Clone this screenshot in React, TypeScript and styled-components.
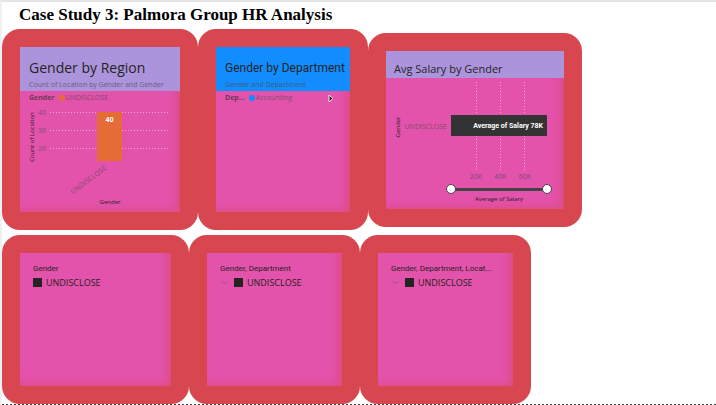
import React, { useState } from "react";
import styled, { createGlobalStyle } from "styled-components";

const GlobalStyle = createGlobalStyle`
  * { box-sizing: border-box; }
  body { margin: 0; background: #fff; font-family: "Open Sans", "Noto Sans", sans-serif; }
`;

const palette = {
  red: "#d84650",
  pink: "#e352ab",
  lilac: "#ac94dc",
  blue: "#118dff",
  orange: "#e66c37",
  ink: "#252423",
  muted: "#7d4f70",
};

const Page = styled.main`
  border-top: 2px solid #e4e4e4;
  border-left: 2px solid #f0f0f0;
`;

const PageTitle = styled.h1`
  margin: 0;
  padding: 2px 17px 3px;
  font: bold 17px/22px "Liberation Serif", serif;
  color: #000;
`;

const Row = styled.section<{ $columns: string }>`
  display: grid;
  grid-template-columns: ${(p) => p.$columns};
`;

const FilterRow = styled(Row)`
  margin-top: 5px;
`;

const PageBreak = styled.div`
  height: 1px;
  background: repeating-linear-gradient(90deg, #444 0 2px, #fff 2px 4px);
`;

const Card = styled.article<{ $lowered?: boolean }>`
  min-width: 0;
  display: flex;
  border: 18px solid ${palette.red};
  border-radius: 18px;
  align-self: ${(p) => (p.$lowered ? "start" : "stretch")};
  margin-top: ${(p) => (p.$lowered ? "4px" : "0")};
`;

const Panel = styled.div`
  flex: 1;
  min-width: 0;
  display: flex;
  flex-direction: column;
  background: ${palette.pink};
  box-shadow: inset -8px -6px 10px -6px rgba(216, 70, 80, 0.6);
`;

const Header = styled.header<{ $color: string; $compact?: boolean }>`
  padding: ${(p) => (p.$compact ? "10px 8px 1px" : "10px 0 0 9px")};
  background: ${(p) => p.$color};
  overflow: hidden;
  white-space: nowrap;
`;

const Heading = styled.h2<{ $size: number; $narrow?: boolean }>`
  margin: 0;
  font-family: ${(p) => (p.$narrow ? '"Roboto", sans-serif' : "inherit")};
  font-size: ${(p) => p.$size}px;
  line-height: ${(p) => (p.$size < 12 ? 16 : 22)}px;
  font-weight: 400;
  color: ${palette.ink};
`;

const Subtitle = styled.p<{ $dim?: boolean }>`
  margin: 0;
  font-family: "Noto Sans", sans-serif;
  font-size: 7px;
  line-height: 12px;
  color: ${(p) => (p.$dim ? "#3b6080" : "#6c6383")};
`;

const Legend = styled.div`
  display: flex;
  align-items: center;
  padding: 0 16px 2px 9px;
  height: 16px;
  font-size: 7px;
  line-height: 14px;
  color: ${palette.muted};
`;

const LegendTitle = styled.b`
  margin-right: 4px;
  font-weight: 700;
  color: #6e3b5c;
`;

const Dot = styled.span<{ $color: string }>`
  width: 6px;
  height: 6px;
  margin-right: 1px;
  border-radius: 50%;
  background: ${(p) => p.$color};
`;

const NextButton = styled.button`
  margin-left: auto;
  padding: 0;
  border: 0;
  background: none;
  display: flex;
`;

const Chart = styled.svg`
  display: block;
  width: 100%;
  height: auto;
  font-size: 7px;
  fill: ${palette.muted};
`;

const AxisTitle = styled.text`
  font-size: 6px;
  fill: ${palette.ink};
  text-anchor: middle;
`;

const BarLabel = styled.text`
  font-family: "Roboto", sans-serif;
  font-weight: 700;
  fill: #fff;
`;

const GridLine = styled.line`
  stroke: #eda6d0;
  stroke-width: 1;
  stroke-dasharray: 1 2;
`;

const RangeTrack = styled.div`
  display: grid;
  align-items: center;
  height: 10px;
  margin: 0 12px 0 60px;
  background: linear-gradient(#444, #444) center / calc(100% - 10px) 3px no-repeat;
`;

const Range = styled.input`
  grid-area: 1 / 1;
  appearance: none;
  width: 100%;
  height: 10px;
  margin: 0;
  background: none;
  pointer-events: none;
  &::-webkit-slider-thumb {
    appearance: none;
    box-sizing: border-box;
    width: 10px;
    height: 10px;
    border: 1px solid #444;
    border-radius: 50%;
    background: #fff;
    pointer-events: auto;
  }
`;

const RangeCaption = styled.div`
  margin: 0 12px 0 60px;
  padding-bottom: 5px;
  text-align: center;
  font-size: 6px;
  line-height: 10px;
  color: ${palette.ink};
`;

const FilterPanel = styled(Panel)`
  min-height: 133px;
  padding: 10px 13px;
`;

const FilterTitle = styled.h3`
  margin: 0;
  font: 400 8px/12px "Roboto", sans-serif;
  color: ${palette.ink};
  white-space: nowrap;
`;

const Option = styled.div`
  display: flex;
  align-items: center;
  height: 15px;
`;

const ExpandButton = styled.button`
  display: flex;
  width: 14px;
  padding: 0 0 0 1px;
  border: 0;
  background: none;
`;

const OptionLabel = styled.label`
  display: flex;
  align-items: center;
  gap: 4px;
  font-size: 9px;
  line-height: 15px;
  color: ${palette.ink};
`;

const Checkbox = styled.input`
  appearance: none;
  width: 9px;
  height: 9px;
  margin: 0;
  border: 1px solid ${palette.ink};
  &:checked { background: ${palette.ink}; }
`;

function RegionChart() {
  return (
    <Chart viewBox="0 0 160 105" role="img" aria-label="Count of Location by Gender">
      {[40, 30, 20].map((value, i) => (
        <g key={value}>
          <GridLine x1="30" x2="149" y1={5.5 + i * 18} y2={5.5 + i * 18} />
          <text x="26" y={8 + i * 18} textAnchor="end">{value}</text>
        </g>
      ))}
      <rect x="77" y="5" width="25" height="49" fill={palette.orange} />
      <BarLabel x="89.5" y="15" textAnchor="middle">40</BarLabel>
      <text transform="translate(87 62) rotate(-37)" textAnchor="end">UNDISCLOSE</text>
      <AxisTitle transform="translate(14 30) rotate(-90)">Count of Location</AxisTitle>
      <AxisTitle x="90" y="97">Gender</AxisTitle>
    </Chart>
  );
}

function SalaryChart() {
  return (
    <Chart viewBox="0 0 178 106" role="img" aria-label="Average of Salary by Gender">
      {["20K", "40K", "60K"].map((value, i) => (
        <g key={value}>
          <GridLine x1={90.5 + i * 24} x2={90.5 + i * 24} y1="4" y2="92" />
          <text x={90 + i * 24.5} y="101" textAnchor="middle">{value}</text>
        </g>
      ))}
      <rect x="65" y="37" width="96" height="21" fill="#333" />
      <BarLabel x="157" y="50" textAnchor="end">Average of Salary 78K</BarLabel>
      <text x="61" y="51" textAnchor="end">UNDISCLOSE</text>
      <AxisTitle transform="translate(14 49) rotate(-90)">Gender</AxisTitle>
    </Chart>
  );
}

function SalaryRange() {
  const [low, setLow] = useState(0);
  const [high, setHigh] = useState(78);
  return (
    <RangeTrack>
      <Range type="range" aria-label="Lowest salary" max={78} value={low} onChange={(e) => setLow(Math.min(+e.target.value, high))} />
      <Range type="range" aria-label="Highest salary" max={78} value={high} onChange={(e) => setHigh(Math.max(+e.target.value, low))} />
    </RangeTrack>
  );
}

function FilterCard({ title, nested }: { title: string; nested?: boolean }) {
  return (
    <Card>
      <FilterPanel>
        <FilterTitle>{title}</FilterTitle>
        <Option>
          {nested && (
            <ExpandButton aria-label="Expand">
              <svg width="7" height="5" viewBox="0 0 7 5" fill="none" stroke="#95597f">
                <path d="M.5 1 3.5 4 6.5 1" />
              </svg>
            </ExpandButton>
          )}
          <OptionLabel>
            <Checkbox type="checkbox" defaultChecked />
            UNDISCLOSE
          </OptionLabel>
        </Option>
      </FilterPanel>
    </Card>
  );
}

export default function App() {
  return (
    <Page>
      <GlobalStyle />
      <PageTitle>Case Study 3: Palmora Group HR Analysis</PageTitle>
      <Row $columns="196fr 170fr 214fr 134fr">
        <Card>
          <Panel>
            <Header $color={palette.lilac}>
              <Heading $size={14}>Gender by Region</Heading>
              <Subtitle>Count of Location by Gender and Gender</Subtitle>
            </Header>
            <Legend>
              <LegendTitle>Gender</LegendTitle>
              <Dot $color={palette.orange} />
              UNDISCLOSE
            </Legend>
            <RegionChart />
          </Panel>
        </Card>
        <Card>
          <Panel>
            <Header $color={palette.blue}>
              <Heading $size={12} $narrow>Gender by Department</Heading>
              <Subtitle $dim>Gender and Department</Subtitle>
            </Header>
            <Legend>
              <LegendTitle>Dep...</LegendTitle>
              <Dot $color={palette.blue} />
              Accounting
              <NextButton aria-label="Next legend items">
                <svg width="6" height="9" viewBox="0 0 6 9">
                  <path d="M1 1 5 4.500 1 8Z" fill="#222" stroke="#f8e6f1" />
                </svg>
              </NextButton>
            </Legend>
          </Panel>
        </Card>
        <Card $lowered>
          <Panel>
            <Header $color={palette.lilac} $compact>
              <Heading $size={11}>Avg Salary by Gender</Heading>
            </Header>
            <SalaryChart />
            <SalaryRange />
            <RangeCaption>Average of Salary</RangeCaption>
          </Panel>
        </Card>
      </Row>
      <FilterRow $columns="187fr 171fr 171fr 185fr">
        <FilterCard title="Gender" />
        <FilterCard title="Gender, Department" nested />
        <FilterCard title="Gender, Department, Locat..." nested />
      </FilterRow>
      <PageBreak />
    </Page>
  );
}
